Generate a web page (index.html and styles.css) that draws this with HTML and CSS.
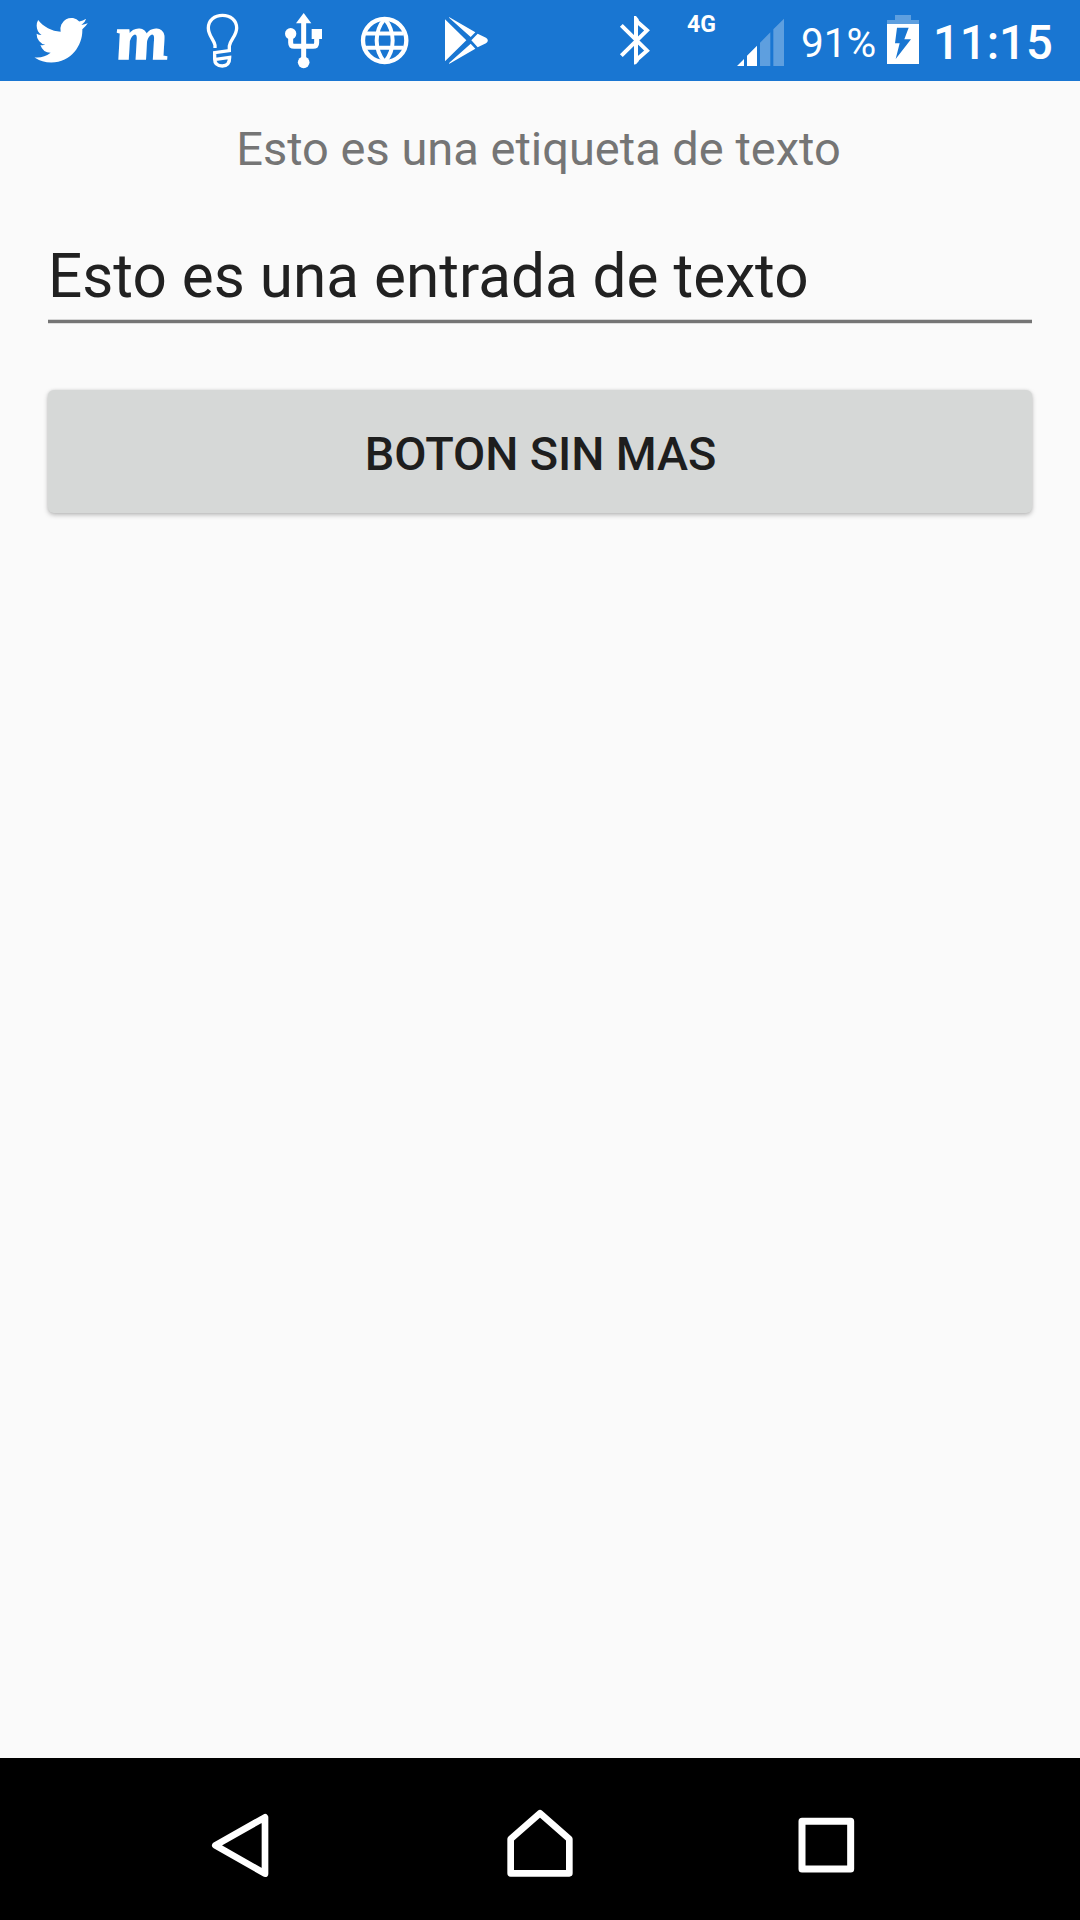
FILE: index.html
```html
<!DOCTYPE html>
<html lang="es">
<head>
<meta charset="utf-8">
<title>Etiqueta, entrada y botón</title>
<link rel="stylesheet" href="styles.css">
</head>
<body>
<header class="status-bar">
  <div class="notifications">
    <svg class="slot" viewBox="0 0 243 243"><path class="fill" transform="translate(43.5 38.5) scale(6.66 6.85)" d="M23.953 4.57a10 10 0 01-2.825.775 4.958 4.958 0 002.163-2.723c-.951.555-2.005.959-3.127 1.184a4.92 4.92 0 00-8.384 4.482C7.69 8.095 4.067 6.13 1.64 3.162a4.822 4.822 0 00-.666 2.475c0 1.71.87 3.213 2.188 4.096a4.904 4.904 0 01-2.228-.616v.06a4.923 4.923 0 003.946 4.827 4.996 4.996 0 01-2.212.085 4.936 4.936 0 004.604 3.417 9.867 9.867 0 01-6.102 2.105c-.39 0-.779-.023-1.17-.067a13.995 13.995 0 007.557 2.209c9.053 0 13.998-7.496 13.998-13.985 0-.21 0-.42-.015-.63A9.935 9.935 0 0024 4.59z"/></svg>
    <span class="slot m-logo">m</span>
    <svg class="slot" viewBox="6 0 243 243"><path class="line" stroke-width="10" d="M105 144V136C102 119 85 107 85 84C85 60 104 46 127.500 46S170 60 170 84C170 107 151 119 148 138V152L104 158V178C104 192 114 198 127 198S149 190 149 172L107 178"/></svg>
    <svg class="slot" viewBox="249 0 243 243">
      <path class="fill" d="M371 39L394 70H348Z"/><rect class="fill" x="395" y="87" width="31" height="30"/>
      <circle class="fill" cx="332" cy="101" r="17"/><circle class="fill" cx="371" cy="187" r="17.500"/>
      <path class="line" stroke-width="15" d="M371 65V180M332 105V128Q332 139 343 139H399Q410 139 410 128V108"/>
    </svg>
    <svg class="slot" viewBox="12 0 243 243">
      <circle class="line" stroke-width="13" cx="134" cy="121.500" r="65"/>
      <path class="line" stroke-width="12" d="M78 100.500H190M78 143.500H190M134 56C102 94 102 149 134 187M134 56C166 94 166 149 134 187"/>
    </svg>
    <svg class="slot" viewBox="255 0 243 243"><path class="fill" d="M315 58L379 121L315 184ZM327 51L406 97L392 111L328 54ZM327 192L406 146L392 131L328 188ZM413 101L438 113Q449 121 438 130L413 142L394 121Z"/></svg>
  </div>
  <div class="system">
    <svg class="bluetooth" viewBox="57 0 96 243"><path class="line" stroke-width="12" d="M64 76L141 152L108 181V62L141 91L64 167"/><path class="fill" d="M102 48H108L116 58V75H102ZM102 168H116V184L108 193H102Z"/></svg>
    <span class="network">4G</span>
    <svg class="signal" viewBox="411 0 141 243"><path class="fill" d="M411 198L432 177V198ZM441 167L471 137V198H441Z"/><path class="faded" d="M480 128L511 97V198H480ZM520 88L552 56V198H520Z"/></svg>
    <span class="percent">91%</span>
    <svg class="battery" viewBox="291 0 96 243"><path class="faded" d="M315 45H363V60H387V72H291V60H315Z"/><path class="fill" fill-rule="evenodd" d="M291 72H387V192H291ZM321 83L315 130H329L317 177L363 118H343L356 83Z"/></svg>
    <time class="clock">11:15</time>
  </div>
</header>
<main class="content">
  <label class="label" for="entrada">Esto es una etiqueta de texto</label>
  <input class="entry" id="entrada" type="text" value="Esto es una entrada de texto">
  <button class="button" type="button">BOTON SIN MAS</button>
</main>
<nav class="nav-bar">
  <svg class="nav-icon" viewBox="0 0 240 486"><path class="line round" stroke-width="20" d="M46 262L195 178V347Z"/></svg>
  <svg class="nav-icon" viewBox="0 0 240 486"><path class="line round" stroke-width="20" d="M32 243L120 166L208 243V346H32Z"/></svg>
  <svg class="nav-icon" viewBox="0 0 240 486"><rect class="line round" stroke-width="21" x="48" y="190" width="146" height="143"/></svg>
</nav>
</body>
</html>
```
FILE: styles.css
```css
* { box-sizing: border-box; }
body {
  margin: 0;
  height: 1920px;
  display: flex;
  flex-direction: column;
  background: #fafafa;
  font-family: Roboto, "Liberation Sans", sans-serif;
  overflow: hidden;
}
svg { display: block; flex: none; }
.fill { fill: #fff; }
.faded { fill: #fff; fill-opacity: .3; }
.line { fill: none; stroke: #fff; }
.round { stroke-linejoin: round; }

.status-bar {
  flex: none;
  height: 81px;
  padding: 0 27px 0 20px;
  display: flex;
  justify-content: space-between;
  background: #1976d2;
  color: #fff;
}
.notifications, .system { display: flex; }
.slot { width: 81px; height: 81px; }
.m-logo {
  text-align: center;
  font: italic bold 63px/77px "Liberation Serif", serif;
  -webkit-text-stroke: 1.6px #fff;
  transform: scaleX(1.06) skewX(7deg);
}
.bluetooth { width: 32px; height: 81px; margin-right: 36px; }
.network { width: 50px; font-size: 23px; font-weight: 700; line-height: 50px; }
.signal { width: 47px; height: 81px; margin-right: 17px; }
.percent { width: 86px; font-size: 40.6px; line-height: 86px; }
.battery { width: 32px; height: 81px; margin-right: 14px; }
.clock { width: 120px; font-size: 47.2px; font-weight: 500; line-height: 87px; }

.content {
  flex: 1;
  display: flex;
  flex-direction: column;
  padding: 39px 48px 0;
}
.label {
  height: 60px;
  padding-right: 3px;
  line-height: 57px;
  font-size: 47px;
  text-align: center;
  color: #757575;
}
.entry {
  height: 143px;
  margin: 0;
  padding: 52px 0 0;
  border: 0;
  border-bottom: 3px solid #757575;
  border-radius: 0;
  background: none;
  box-shadow: inset 0 -1px #d6d6d6, 0 1px #dedede;
  outline: none;
  font: 60.25px/90px Roboto, sans-serif;
  color: #212121;
}
.button {
  height: 123px;
  margin: 67px 0 0;
  padding: 4px 0 0 1px;
  border: 0;
  border-radius: 6px;
  background: #d6d8d7;
  box-shadow: 0 2px 5px rgba(0, 0, 0, .26), 0 0 3px rgba(0, 0, 0, .08);
  font: 500 46.8px/56px Roboto, sans-serif;
  letter-spacing: -.1px;
  color: #1e1e1e;
}

.nav-bar {
  flex: none;
  height: 162px;
  padding: 0 214px 0 200px;
  display: flex;
  justify-content: space-between;
  background: #000;
}
.nav-icon { width: 80px; height: 162px; }
.nav-icon:nth-child(2) { margin-left: 14px; }
```
